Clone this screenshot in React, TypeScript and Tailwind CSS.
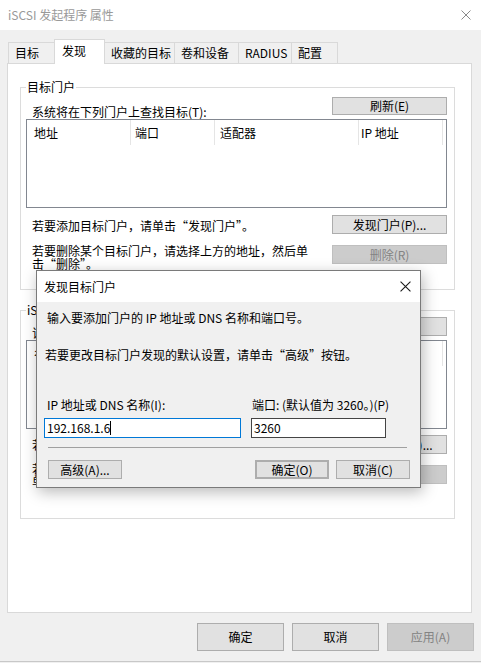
import React from 'react'

type BtnProps = {
  children: React.ReactNode
  className?: string
  disabled?: boolean
}

function Button({ children, className = '', disabled = false }: BtnProps) {
  return (
    <div
      className={`flex items-center justify-center border text-[12px] leading-none whitespace-nowrap ${
        disabled
          ? 'bg-[#cccccc] border-[#bfbfbf] text-[#838383]'
          : 'bg-[#e1e1e1] border-[#adadad] text-black'
      } ${className}`}
    >
      {children}
    </div>
  )
}

const tabs = [
  { label: '目标', w: 'w-[47px]' },
  { label: '发现', w: 'w-[51px]', active: true },
  { label: '收藏的目标', w: 'w-[71px]' },
  { label: '卷和设备', w: 'w-[65px]' },
  { label: 'RADIUS', w: 'w-[54px]' },
  { label: '配置', w: 'w-[47px]' },
]

function CloseIcon({ size, color }: { size: number; color: string }) {
  return (
    <svg width={size} height={size} viewBox="0 0 10 10">
      <path d="M0.5 0.5 L9.5 9.5 M9.5 0.5 L0.5 9.5" stroke={color} strokeWidth="1" fill="none" />
    </svg>
  )
}

export default function App() {
  return (
    <div className="relative w-[481px] h-[663px] overflow-hidden bg-[#f0f0f0] text-black font-['Noto_Sans_CJK_SC',sans-serif] text-[12px] flex flex-col">
      {/* Title bar */}
      <div className="h-[30px] bg-white flex items-center justify-between pl-[8px] pr-[10px] shrink-0">
        <span className="text-[12px] text-[#999999] leading-none">iSCSI 发起程序 属性</span>
        <CloseIcon size={10} color="#8a8a8a" />
      </div>

      {/* Tabs */}
      <div className="flex items-end pl-[9px] pt-[9px] shrink-0">
        {tabs.map((t, i) => (
          <div
            key={i}
            className={
              t.active
                ? `relative z-10 -mb-px -ml-px h-[25px] ${t.w} bg-white border border-b-0 border-[#d9d9d9] pl-[7px] pt-[3px] leading-[16px]`
                : `h-[21px] ${t.w} -ml-px bg-[#f0f0f0] border border-b-0 border-[#d9d9d9] pl-[6px] leading-[19px]`
            }
          >
            {t.label}
          </div>
        ))}
      </div>

      {/* Tab page */}
      <div className="ml-[7px] w-[465px] h-[550px] bg-white border border-[#d9d9d9] shrink-0">
        {/* 目标门户 */}
        <div className="relative mt-[23px] ml-[12px] w-[435px] h-[203px] border border-[#dcdcdc] pl-[5px] pr-[7px]">
          <span className="absolute left-[5px] top-[-9px] bg-white px-[1px] leading-[16px]">目标门户</span>
          <div className="flex justify-between pt-[9px] h-[31px]">
            <span className="self-end ml-[6px] leading-[14px]">系统将在下列门户上查找目标(T):</span>
            <Button className="w-[115px] h-[18px]">刷新(E)</Button>
          </div>
          <div className="h-[89px] border border-[#828790] bg-white">
            <div className="flex h-[25px]">
              <div className="w-[104px] border-r border-[#e5e5e5] pl-[7px] flex items-center">地址</div>
              <div className="w-[84px] border-r border-[#e5e5e5] pl-[4px] flex items-center">端口</div>
              <div className="w-[144px] border-r border-[#e5e5e5] pl-[5px] flex items-center">适配器</div>
              <div className="w-[84px] border-r border-[#e5e5e5] pl-[2px] flex items-center">IP 地址</div>
            </div>
          </div>
          <div className="flex justify-between items-center mt-[7px]">
            <span className="ml-[6px] mt-[3px] leading-[14px]">若要添加目标门户，请单击“发现门户”。</span>
            <Button className="w-[115px] h-[19px]">发现门户(P)...</Button>
          </div>
          <div className="flex justify-between items-start mt-[11px]">
            <span className="ml-[6px] w-[280px] leading-[13px] -mt-[1px]">若要删除某个目标门户，请选择上方的地址，然后单击“删除”。</span>
            <Button disabled className="w-[115px] h-[19px]">删除(R)</Button>
          </div>
        </div>

        {/* iSNS 服务器 */}
        <div className="relative mt-[20px] ml-[12px] w-[435px] h-[209px] border border-[#dcdcdc] pl-[5px] pr-[7px]">
          <span className="absolute left-[5px] top-[-9px] bg-white px-[1px] leading-[16px]">iSNS 服务器</span>
          <div className="flex justify-between pt-[6px] h-[29px]">
            <span className="self-end ml-[6px] leading-[14px]">该系统已在以下 iSNS 服务器上注册(S):</span>
            <Button className="w-[115px] h-[19px]">刷新(F)</Button>
          </div>
          <div className="h-[89px] border border-[#828790] bg-white">
            <div className="flex h-[25px]">
              <div className="w-[416px] border-r border-[#e5e5e5] pl-[7px] flex items-center">名称</div>
            </div>
          </div>
          <div className="flex justify-between items-center mt-[6px]">
            <span className="ml-[6px] mt-[1px] leading-[14px]">若要添加 iSNS 服务器，请单击“添加服务器”。</span>
            <Button className="w-[115px] h-[19px]">添加服务器(D)...</Button>
          </div>
          <div className="flex justify-between items-start mt-[11px]">
            <span className="ml-[6px] w-[280px] leading-[12px] -mt-[2px]">若要删除 iSNS 服务器，请选择上方的服务器，然后单击“删除”。</span>
            <Button disabled className="w-[115px] h-[19px]">删除(M)</Button>
          </div>
        </div>
      </div>

      {/* Bottom buttons */}
      <div className="flex justify-end gap-[8px] pr-[7px] mt-[10px] shrink-0">
        <Button className="w-[87px] h-[28px]">确定</Button>
        <Button className="w-[87px] h-[28px]">取消</Button>
        <Button disabled className="w-[87px] h-[28px]">应用(A)</Button>
      </div>
      <div className="mt-auto mb-[1px] h-px bg-[#c8c8c8] shrink-0" />

      {/* Dialog: 发现目标门户 */}
      <div className="absolute left-[36px] top-[270px] w-[385px] h-[218px] border border-[#7a7a7a] bg-[#f0f0f0] shadow-[2px_4px_14px_rgba(0,0,0,0.28)] flex flex-col">
        <div className="h-[31px] bg-white flex items-center justify-between pl-[7px] pr-[9px] shrink-0">
          <span className="leading-none">发现目标门户</span>
          <CloseIcon size={11} color="#1a1a1a" />
        </div>
        <div className="flex flex-col pt-[10px]">
          <div className="ml-[10px] leading-[12px]">输入要添加门户的 IP 地址或 DNS 名称和端口号。</div>
          <div className="ml-[8px] mt-[25px] leading-[12px]">若要更改目标门户发现的默认设置，请单击“高级”按钮。</div>
          <div className="flex mt-[38px]">
            <div className="ml-[7px] w-[197px] flex flex-col">
              <span className="pl-[3px] leading-[12px]">IP 地址或 DNS 名称(I):</span>
              <div className="mt-[7px] h-[20px] bg-white border border-[#0078d7] flex items-center pl-[2px]">
                <span className="leading-none">192.168.1.6</span>
                <span className="w-px h-[14px] bg-black" />
              </div>
            </div>
            <div className="ml-[10px] w-[135px] flex flex-col">
              <span className="pl-[1px] leading-[12px] whitespace-nowrap">端口: (默认值为 3260。)(P)</span>
              <div className="mt-[7px] h-[20px] bg-white border border-[#444444] flex items-center pl-[2px]">
                <span className="leading-none">3260</span>
              </div>
            </div>
          </div>
          <div className="ml-[11px] mt-[9px] w-[359px] h-px bg-[#a0a0a0]" />
          <div className="flex justify-between ml-[11px] mr-[10px] mt-[12px]">
            <Button className="w-[74px] h-[19px]">高级(A)...</Button>
            <div className="flex gap-[7px]">
              <Button className="w-[74px] h-[19px] border-2 border-[#0078d7]">确定(O)</Button>
              <Button className="w-[74px] h-[19px]">取消(C)</Button>
            </div>
          </div>
        </div>
      </div>
    </div>
  )
}
